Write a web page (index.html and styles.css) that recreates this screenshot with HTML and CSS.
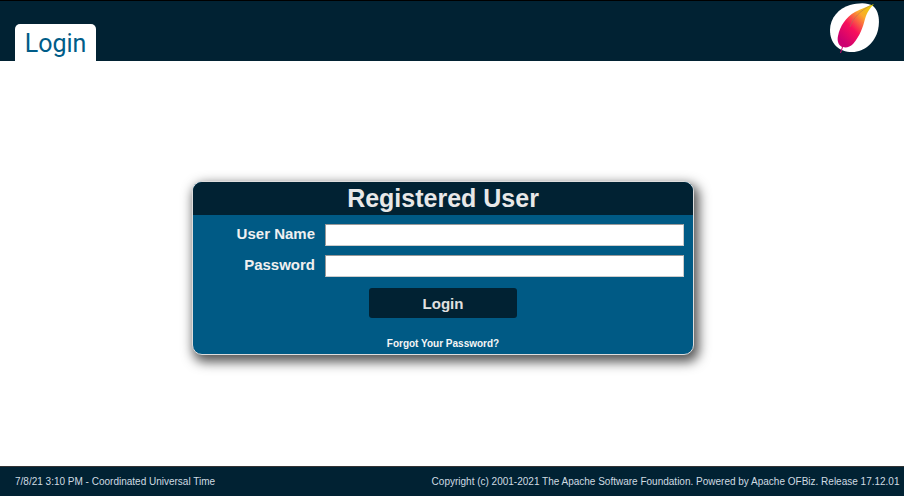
FILE: index.html
```html
<!DOCTYPE html>
<html lang="en">
<head>
<meta charset="utf-8">
<title>Login</title>
<link rel="stylesheet" href="styles.css">
</head>
<body>
<div class="page">
  <header class="header">
    <div class="tab">Login</div>
    <svg class="logo" width="50" height="56" viewBox="0 0 50 56" aria-label="Apache OFBiz">
      <defs>
        <linearGradient id="leaf" x1="0.9" y1="0" x2="0.25" y2="0.85">
          <stop offset="0" stop-color="#e8d400"/>
          <stop offset="0.3" stop-color="#fba82c"/>
          <stop offset="0.65" stop-color="#f8105c"/>
          <stop offset="1" stop-color="#cc0070"/>
        </linearGradient>
      </defs>
      <path d="M1 30 C1 18 10 8 21 5 C29 3 38 2 44 6 C50 11 51 21 49 30 C46 42 36 52 23 52 C10 52 1 44 1 30 Z" fill="#fff"/>
      <path d="M11 53 L13 47 C9 45 8 40 9 36 C11 26 17 17 26 12 C32 9 39 6 45 4 C41 8 38 12 36 19 C34 27 31 36 24 44 C21 47 17 48 14 47 L12 53 Z" fill="url(#leaf)"/>
      <path d="M21 27 C24 18 31 11 42 5" fill="none" stroke="#a8705a" stroke-width="0.5"/>
    </svg>
  </header>
  <main class="main">
    <section class="card">
      <h1 class="card-title">Registered User</h1>
      <form class="form">
        <div class="row">
          <label class="label" for="u">User Name</label>
          <input class="input" id="u" type="text">
        </div>
        <div class="row row-second">
          <label class="label" for="p">Password</label>
          <input class="input" id="p" type="password">
        </div>
        <div class="actions"><button class="btn" type="button">Login</button></div>
        <div class="forgot"><a class="forgot-link" href="#">Forgot Your Password?</a></div>
      </form>
    </section>
  </main>
  <footer class="footer">
    <span>7/8/21 3:10 PM - Coordinated Universal Time</span>
    <span>Copyright (c) 2001-2021 The Apache Software Foundation. Powered by Apache OFBiz. Release 17.12.01</span>
  </footer>
</div>
</body>
</html>
```
FILE: styles.css
```css
* { box-sizing: border-box; }
html, body { margin: 0; height: 100%; }
body { font-family: "Liberation Sans", Arial, sans-serif; background: #fff; overflow: hidden; }
.page { display: flex; flex-direction: column; height: 496px; }

.header {
  height: 61px;
  flex: none;
  background: #012233;
  border-top: 1px solid #000;
  display: flex;
  justify-content: space-between;
  align-items: flex-end;
  padding: 0 25px 0 15px;
  position: relative;
}
.tab {
  width: 81px;
  height: 37px;
  background: #fff;
  border-radius: 5px 5px 0 0;
  color: #005c88;
  font-family: Roboto, sans-serif;
  font-size: 25px;
  line-height: 39px;
  text-align: center;
}
.logo { position: absolute; right: 25px; top: -1px; }

.main { flex: 1; padding: 120px 0 0 192px; }
.card {
  width: 502px;
  height: 174px;
  border: 1px solid #ddd;
  border-radius: 10px;
  background: #005a85;
  box-shadow: 3px 5px 12px 2px #555;
  overflow: hidden;
}
.card-title {
  margin: 0;
  height: 33px;
  background: #012233;
  color: #e8e8e8;
  font-size: 25px;
  font-weight: bold;
  line-height: 33px;
  text-align: center;
}
.form { display: flex; flex-direction: column; padding-top: 9px; }
.row { display: flex; height: 22px; margin-bottom: 9px; }
.row-second { margin-bottom: 10px; }
.label {
  width: 122px;
  text-align: right;
  color: #f0f0f0;
  font-size: 15px;
  font-weight: bold;
  line-height: 20px;
}
.input {
  margin-left: 10px;
  width: 359px;
  height: 22px;
  padding: 0;
  background: #fff;
  border: 1px solid;
  border-color: #999 #ccc #ccc #999;
  border-radius: 0;
}
.actions { display: flex; justify-content: center; padding-top: 1px; }
.btn {
  width: 148px;
  height: 30px;
  background: #012233;
  color: #e0e0e0;
  border: 0;
  border-radius: 3px;
  font-family: "Liberation Sans", Arial, sans-serif;
  font-size: 15px;
  font-weight: bold;
}
.forgot { text-align: center; padding-top: 17px; line-height: 14px; }
.forgot-link { color: #f5f5f5; font-size: 10px; font-weight: bold; text-decoration: none; }

.footer {
  height: 30px;
  flex: none;
  background: #012233;
  border-top: 1px solid #333;
  color: #cfdbe2;
  font-size: 10px;
  display: flex;
  justify-content: space-between;
  align-items: center;
  padding: 0 4.5px 0 15px;
}
```
